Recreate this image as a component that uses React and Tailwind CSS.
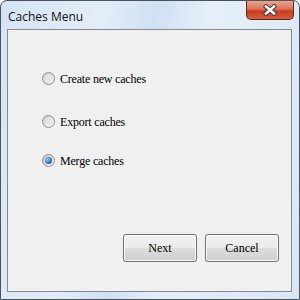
import React from 'react';

const Radio = ({ checked, label, className }) => (
  <label className={`flex items-center gap-[5px] ${className || ''}`}>
    <span className="w-[13px] h-[13px] rounded-full border border-[#8e8f8f] bg-gradient-to-br from-[#c8c8c8] to-[#f6f6f6] flex items-center justify-center">
      {checked ? (
        <span className="w-[7px] h-[7px] rounded-full bg-[radial-gradient(circle_at_35%_35%,#8ad2fb,#1e5fa8_70%,#0d3f7a)]" />
      ) : (
        <span className="w-[9px] h-[9px] rounded-full bg-gradient-to-br from-[#d8d8d8] to-[#f2f2f2]" />
      )}
    </span>
    <span className="text-[12px] tracking-[-0.2px] text-black leading-none">{label}</span>
  </label>
);

const Button = ({ children }) => (
  <button className="w-[74px] h-[28px] rounded-[3px] border border-[#707070] bg-[linear-gradient(#f2f2f2_0%,#ebebeb_50%,#dddddd_51%,#cfcfcf_100%)] text-[12px] text-black shadow-[inset_0_0_0_1px_#fbfbfb]">
    {children}
  </button>
);

const App = () => {
  return (
    <div className="w-[300px] h-[300px] flex flex-col rounded-t-[7px] border border-[#4a5260] bg-[linear-gradient(100deg,#d6e4f3_0%,#e3edf8_30%,#cfe0f2_45%,#e6eff9_60%,#d9e7f5_100%)] overflow-hidden" style={{ fontFamily: '"Liberation Serif", "Times New Roman", serif' }}>
      <div className="h-[28px] flex justify-between pl-[7px] pr-[5px]">
        <span className="mt-[7px] text-[12px] text-[#111]" style={{ fontFamily: '"Open Sans", "Noto Sans", sans-serif' }}>
          Caches Menu
        </span>
        <div className="w-[48px] h-[19px] rounded-b-[5px] border border-t-0 border-[#5a2a22] bg-[linear-gradient(#eba58f_0%,#dd7259_45%,#c73b1f_55%,#d75d3c_100%)] flex items-center justify-center">
          <svg width="16" height="12" viewBox="0 0 16 12">
            <path d="M4 2.5 L12 9.5 M12 2.5 L4 9.5" stroke="#3b3b3b" strokeWidth="4.5" strokeLinecap="square" />
            <path d="M4 2.5 L12 9.5 M12 2.5 L4 9.5" stroke="#ffffff" strokeWidth="2.5" strokeLinecap="square" />
          </svg>
        </div>
      </div>
      <div className="ml-[6px] w-[285px] h-[263px] border border-[#848a94] bg-[#f0f0f0] flex flex-col">
        <div className="flex flex-col pl-[34px] pt-[42px]">
          <Radio label="Create new caches" />
          <Radio label="Export caches" className="mt-[30px]" />
          <Radio checked label="Merge caches" className="mt-[26px]" />
        </div>
        <div className="mt-auto mb-[29px] flex justify-end gap-[8px] pr-[12px]">
          <Button>Next</Button>
          <Button>Cancel</Button>
        </div>
      </div>
    </div>
  );
};

export default App;
